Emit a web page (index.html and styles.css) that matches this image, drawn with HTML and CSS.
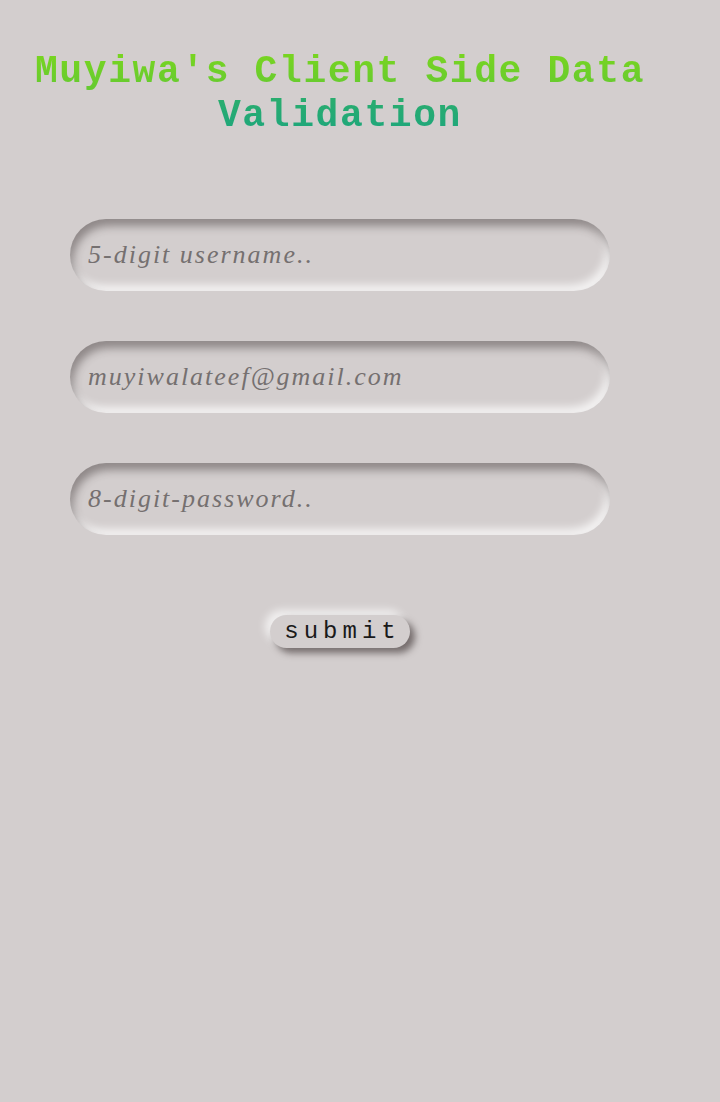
FILE: index.html
```html
<!DOCTYPE html>
<html lang="en">
<head>
<meta charset="utf-8">
<title>Client Side Data Validation</title>
<link rel="stylesheet" href="styles.css">
</head>
<body>
<main class="page">
  <h1 class="title">Muyiwa's Client Side Data Validation</h1>
  <form class="form" onsubmit="return false">
    <input class="field" type="text" placeholder="5-digit username..">
    <input class="field" type="email" placeholder="muyiwalateef@gmail.com">
    <input class="field" type="password" placeholder="8-digit-password..">
    <button class="submit" type="submit">submit</button>
  </form>
</main>
</body>
</html>
```
FILE: styles.css
```css
html, body {
  margin: 0;
  padding: 0;
  background: #d3cece;
}
body {
  min-height: 1102px;
}
.page {
  width: 680px;
}
.title {
  margin: 50px 0 0;
  font-family: "Liberation Mono", "Courier New", monospace;
  font-weight: bold;
  font-size: 38px;
  line-height: 44px;
  letter-spacing: 1.6px;
  text-align: center;
  background: linear-gradient(180deg, #7ad61e 0%, #62c834 50%, #2aad6e 54%, #1ca57e 100%);
  -webkit-background-clip: text;
  background-clip: text;
  color: transparent;
}
.form {
  margin-top: 81px;
  display: flex;
  flex-direction: column;
  align-items: center;
  gap: 50px;
}
.field {
  box-sizing: border-box;
  width: 540px;
  height: 72px;
  border: none;
  outline: none;
  border-radius: 36px;
  padding: 0 18px;
  background: #d3cece;
  box-shadow: inset 3px 7px 8px rgba(60, 50, 50, 0.45),
              inset -4px -6px 8px rgba(255, 255, 255, 0.75);
  font-family: "Liberation Serif", "Times New Roman", serif;
  font-style: italic;
  font-size: 26px;
  letter-spacing: 2px;
  color: #555;
}
.field::placeholder {
  color: #757070;
}
.submit {
  margin-top: 30px;
  width: 140px;
  height: 33px;
  border: none;
  border-radius: 17px;
  background: #d3cece;
  box-shadow: 5px 5px 7px rgba(40, 30, 30, 0.55),
              -5px -5px 9px rgba(255, 255, 255, 0.7);
  font-family: "Liberation Mono", "Courier New", monospace;
  font-size: 24px;
  letter-spacing: 5px;
  padding: 0 0 0 5px;
  color: #1a1a1a;
  cursor: pointer;
}
```
